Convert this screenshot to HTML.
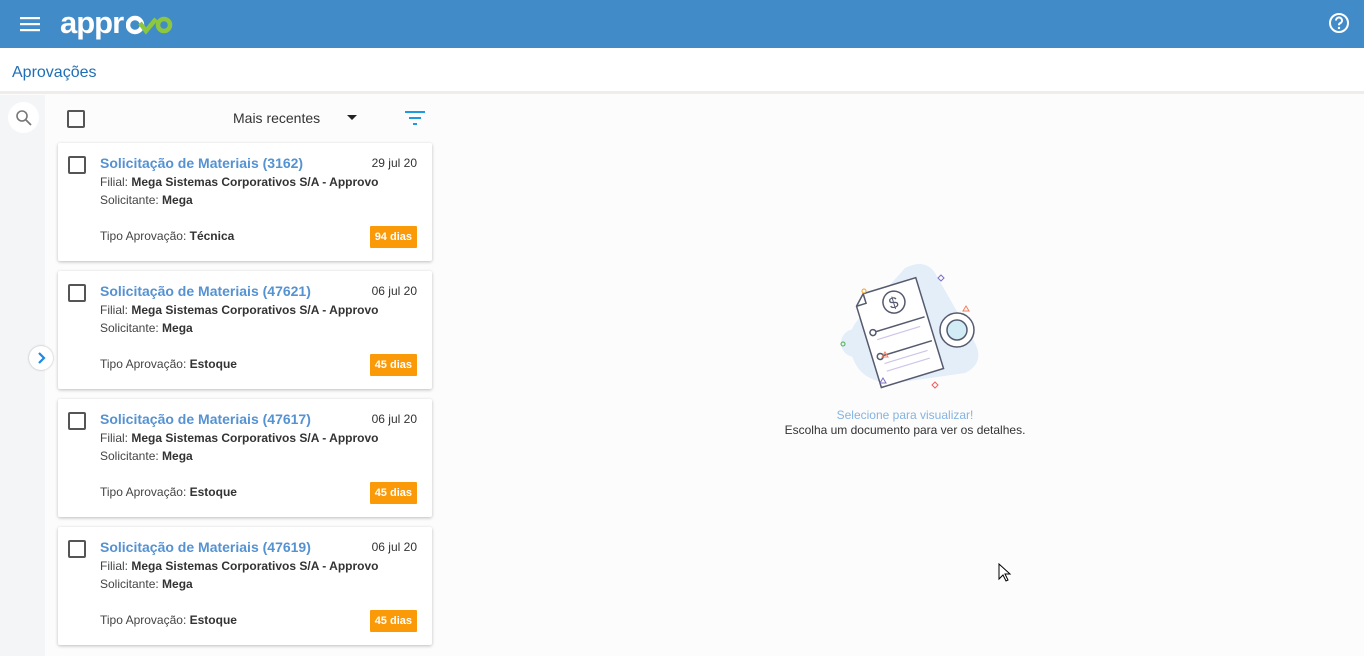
<!DOCTYPE html>
<html><head><meta charset="utf-8"><style>
*{box-sizing:border-box;margin:0;padding:0}
body{width:1364px;height:656px;overflow:hidden;background:#fcfcfc;font-family:"Liberation Sans",Arial,sans-serif;position:relative}
.hdr{position:absolute;left:0;top:0;width:1364px;height:48px;background:#418bc9;box-shadow:0 2px 4px rgba(0,0,0,.2)}
.sub{position:absolute;left:0;top:48px;width:1364px;height:46px;background:#fff;border-bottom:3px solid #f0ecec}
.sub span{position:absolute;left:12px;top:16px;font-size:16px;color:#1f6fb5}
.rail{position:absolute;left:0;top:95px;width:45px;height:561px;background:#f4f5f7}
.card{position:absolute;left:58px;width:374px;height:118px;background:#fff;border-radius:2px;box-shadow:0 1px 3px rgba(0,0,0,.25)}
.cb{position:absolute;width:18px;height:18px;border:2px solid #555;border-radius:2px}
.t{position:absolute;left:42px;top:12px;font-size:14px;font-weight:bold;color:#5592d2}
.d{position:absolute;right:15px;top:13px;font-size:12px;color:#333}
.l{position:absolute;left:42px;font-size:12px;color:#444}
.l b{color:#333}
.bd{position:absolute;right:15px;top:83px;background:#fb9a09;color:#fff;font-size:11px;font-weight:bold;padding:5px 5px;border-radius:1px}
</style></head><body>
<div class="hdr">
<svg style="position:absolute;left:20px;top:16px" width="20" height="16"><rect y="1" width="20" height="2.2" fill="#fff"/><rect y="7" width="20" height="2.2" fill="#fff"/><rect y="13" width="20" height="2.2" fill="#fff"/></svg>
<div style="position:absolute;left:60px;top:5px;font-size:31px;font-weight:bold;color:#fff;letter-spacing:-1px;font-family:'Liberation Sans',sans-serif">appr</div>
<svg style="position:absolute;left:126px;top:13px" width="48" height="24"><circle cx="9" cy="12" r="7" fill="none" stroke="#fff" stroke-width="4.5"/><path d="M14 10 L20 18 L30 6" fill="none" stroke="#8dc63f" stroke-width="4.5"/><circle cx="38" cy="12" r="6" fill="none" stroke="#8dc63f" stroke-width="4.5"/></svg>
<svg style="position:absolute;left:1328px;top:12px" width="22" height="22"><circle cx="11" cy="11" r="9" fill="none" stroke="#fff" stroke-width="2"/><path d="M8 8.5a3 3 0 1 1 4.2 2.7c-.9.4-1.2 1-1.2 2" fill="none" stroke="#fff" stroke-width="2"/><circle cx="11" cy="16" r="1.2" fill="#fff"/></svg>
</div>
<div class="sub"><span>Aprovações</span></div>
<div class="rail">
<div style="position:absolute;left:8px;top:7px;width:31px;height:31px;border-radius:50%;background:#fff"></div>
<svg style="position:absolute;left:15px;top:14px" width="18" height="18"><circle cx="7" cy="7" r="5" fill="none" stroke="#777" stroke-width="1.6"/><path d="M11 11l5 5" stroke="#777" stroke-width="1.8"/></svg>
<div style="position:absolute;left:29px;top:251px;width:24px;height:24px;border-radius:50%;background:#fff;box-shadow:0 0 2px rgba(0,0,0,.3)"></div>
<svg style="position:absolute;left:36px;top:257px" width="12" height="12"><path d="M3 1l5 5-5 5" fill="none" stroke="#1e88e5" stroke-width="2.2"/></svg>
</div>
<div class="cb" style="left:67px;top:110px"></div>
<div style="position:absolute;left:233px;top:110px;font-size:14px;color:#333">Mais recentes</div>
<svg style="position:absolute;left:347px;top:115px" width="10" height="6"><path d="M0 0h10L5 5z" fill="#222"/></svg>
<svg style="position:absolute;left:405px;top:110px" width="20" height="16"><rect x="0" y="1" width="20" height="2" fill="#1e9be0"/><rect x="4" y="7" width="12" height="2" fill="#1e9be0"/><rect x="8" y="13" width="4" height="2" fill="#1e9be0"/></svg>

<div class="card" style="top:143px"><div class="cb" style="left:10px;top:13px"></div><div class="t">Solicitação de Materiais (3162)</div><div class="d">29 jul 20</div><div class="l" style="top:32px">Filial: <b>Mega Sistemas Corporativos S/A - Approvo</b></div><div class="l" style="top:50px">Solicitante: <b>Mega</b></div><div class="l" style="top:86px">Tipo Aprovação: <b>Técnica</b></div><div class="bd">94 dias</div></div>
<div class="card" style="top:271px"><div class="cb" style="left:10px;top:13px"></div><div class="t">Solicitação de Materiais (47621)</div><div class="d">06 jul 20</div><div class="l" style="top:32px">Filial: <b>Mega Sistemas Corporativos S/A - Approvo</b></div><div class="l" style="top:50px">Solicitante: <b>Mega</b></div><div class="l" style="top:86px">Tipo Aprovação: <b>Estoque</b></div><div class="bd">45 dias</div></div>
<div class="card" style="top:399px"><div class="cb" style="left:10px;top:13px"></div><div class="t">Solicitação de Materiais (47617)</div><div class="d">06 jul 20</div><div class="l" style="top:32px">Filial: <b>Mega Sistemas Corporativos S/A - Approvo</b></div><div class="l" style="top:50px">Solicitante: <b>Mega</b></div><div class="l" style="top:86px">Tipo Aprovação: <b>Estoque</b></div><div class="bd">45 dias</div></div>
<div class="card" style="top:527px"><div class="cb" style="left:10px;top:13px"></div><div class="t">Solicitação de Materiais (47619)</div><div class="d">06 jul 20</div><div class="l" style="top:32px">Filial: <b>Mega Sistemas Corporativos S/A - Approvo</b></div><div class="l" style="top:50px">Solicitante: <b>Mega</b></div><div class="l" style="top:86px">Tipo Aprovação: <b>Estoque</b></div><div class="bd">45 dias</div></div>

<svg style="position:absolute;left:835px;top:258px" width="150" height="135">
<path d="M70 10 q20-10 30 5 l40 70 q10 20-10 30 l-70 10 q-30 0-40-20 q-15-30 10-50z" fill="#e3eef9"/>
<circle cx="20" cy="85" r="14" fill="#e3eef9"/>
<g transform="rotate(-17 70 70)"><path d="M40 25 h55 v95 h-65 v-85z" fill="#fff" stroke="#555a6e" stroke-width="1.5"/><path d="M40 25 v10 h-10" fill="none" stroke="#555a6e" stroke-width="1.5"/>
<circle cx="67" cy="42" r="11" fill="none" stroke="#555a6e" stroke-width="1.5"/><text x="62" y="48" font-size="16" fill="#555a6e" font-family="Liberation Sans">$</text>
<path d="M40 65h52M40 90h52" stroke="#555a6e" stroke-width="1.5"/><circle cx="38" cy="65" r="3" fill="#fff" stroke="#555a6e" stroke-width="1.5"/><circle cx="38" cy="90" r="3" fill="#fff" stroke="#555a6e" stroke-width="1.5"/>
<path d="M40 73h45M40 98h45M40 106h45" stroke="#cfc5e8" stroke-width="1.2"/></g>
<circle cx="122" cy="72" r="17" fill="#fff" stroke="#555a6e" stroke-width="1.5"/><circle cx="122" cy="72" r="10" fill="#d2ecf6" stroke="#555a6e" stroke-width="1.5"/>
<circle cx="29" cy="33" r="2" fill="none" stroke="#f0a030"/><circle cx="8" cy="86" r="2" fill="none" stroke="#4caf50"/><path d="M106 17l3 3-3 3-3-3z" fill="none" stroke="#7a70c0"/><path d="M131 48l3 5h-6z" fill="none" stroke="#f08060"/><path d="M50 94l3 5h-6z" fill="none" stroke="#f08060"/><path d="M166 90l3 3-3 3-3-3z" fill="none" stroke="#4caf50" transform="translate(-1 0)"/><path d="M48 120l3 5h-6z" fill="none" stroke="#7a70c0"/><path d="M100 124l3 3-3 3-3-3z" fill="none" stroke="#f06060"/>
</svg>
<div style="position:absolute;left:780px;top:408px;width:250px;text-align:center;font-size:12px;color:#85b3e0">Selecione para visualizar!</div>
<div style="position:absolute;left:780px;top:423px;width:250px;text-align:center;font-size:12px;color:#333">Escolha um documento para ver os detalhes.</div>
<svg style="position:absolute;left:998px;top:563px" width="14" height="20"><path d="M1 1v15l4-4 3 6 2-1-3-6h5z" fill="#fff" stroke="#000"/></svg>
</body></html>
